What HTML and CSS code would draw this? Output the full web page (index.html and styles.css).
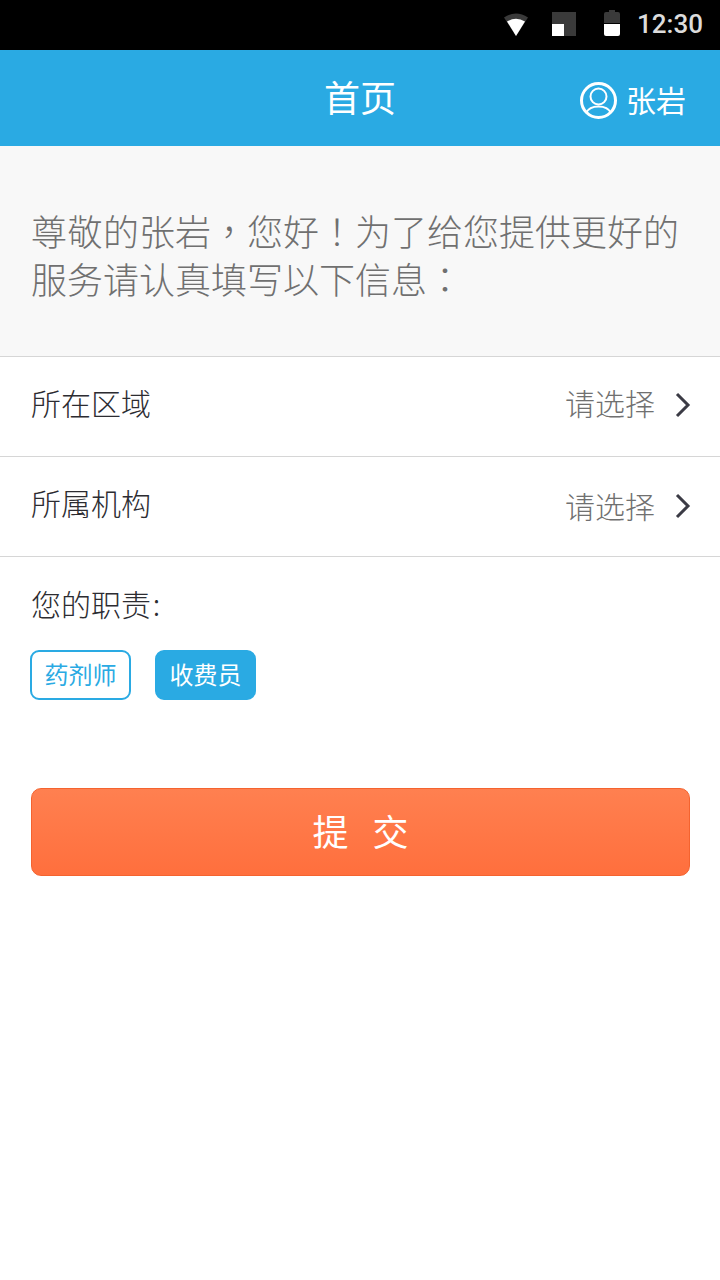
FILE: index.html
```html
<!DOCTYPE html>
<html lang="zh">
<head>
  <meta charset="UTF-8">
  <meta name="viewport" content="width=device-width, initial-scale=1.0">
  <title>首页</title>
  <link rel="stylesheet" href="styles.css">
</head>
<body>
  <div class="status-bar">
    <svg class="icon-wifi" width="24" height="24" viewBox="0 0 24 24">
      <path d="M0 5.5 Q12 -2.5 24 5.5 L12 24 Z" fill="#3a3a3a"/>
      <path d="M3 9.5 Q12 4 21 9.5 L12 24 Z" fill="#fff"/>
    </svg>
    <svg class="icon-sim" width="24" height="24" viewBox="0 0 24 24">
      <rect width="24" height="24" fill="#3a3a3a"/>
      <rect y="12" width="12" height="12" fill="#fff"/>
    </svg>
    <svg class="icon-battery" width="16" height="26" viewBox="0 0 16 26">
      <path d="M5 0h6v2h3a2 2 0 0 1 2 2v9H0V4a2 2 0 0 1 2-2h3z" fill="#3a3a3a"/>
      <path d="M0 14h16v10a2 2 0 0 1-2 2H2a2 2 0 0 1-2-2z" fill="#fff"/>
    </svg>
    <span class="clock">12:30</span>
  </div>

  <header class="top-bar">
    <h1>首页</h1>
    <div class="user">
      <svg width="37" height="37" viewBox="0 0 37 37" fill="none" stroke="#fff">
        <circle cx="18.5" cy="18.5" r="17" stroke-width="3"/>
        <circle cx="18.5" cy="14.5" r="8" stroke-width="2"/>
        <path d="M6 31c2-4 7-6.500 12.500-6.500S29 27 31 31" stroke-width="2"/>
      </svg>
      <span>张岩</span>
    </div>
  </header>

  <section class="notice">
    <p lang="zh-TW">尊敬的张岩，您好！为了给您提供更好的服务请认真填写以下信息：</p>
  </section>

  <div class="row">
    <span class="row-label">所在区域</span>
    <span class="row-value">请选择</span>
    <svg class="chevron" width="16" height="26" viewBox="0 0 16 26"><path d="M2 2l11 11L2 24" fill="none" stroke="#3b3b45" stroke-width="3"/></svg>
  </div>
  <div class="row row-lower">
    <span class="row-label">所属机构</span>
    <span class="row-value">请选择</span>
    <svg class="chevron" width="16" height="26" viewBox="0 0 16 26"><path d="M2 2l11 11L2 24" fill="none" stroke="#3b3b45" stroke-width="3"/></svg>
  </div>

  <section class="duty">
    <div class="duty-title">您的职责 :</div>
    <div class="tags">
      <span class="tag">药剂师</span>
      <span class="tag selected">收费员</span>
    </div>
  </section>

  <button class="submit">提 交</button>
</body>
</html>
```

FILE: styles.css
```css
* { box-sizing: border-box; }
body {
  margin: 0;
  background: #fff;
  font-family: "Noto Sans CJK SC", "Liberation Sans", sans-serif;
  font-weight: 300;
  color: #2c2c31;
}
.status-bar {
  height: 50px;
  background: #000;
  display: flex;
  align-items: center;
  justify-content: flex-end;
  padding-right: 17px;
}
.icon-wifi { margin-right: 24px; margin-top: -2px; }
.icon-sim { margin-right: 28px; margin-top: -2px; }
.icon-battery { margin-right: 17px; margin-top: -4px; }
.clock {
  font-family: Roboto, "Liberation Sans", sans-serif;
  font-size: 26px;
  font-weight: 500;
  color: #dcdcdc;
  margin-top: -2px;
}
.top-bar {
  height: 96px;
  background: #2aaae3;
  color: #fff;
  display: flex;
  align-items: center;
  justify-content: center;
  position: relative;
}
.top-bar h1 { margin: 0 0 4px; font-size: 36px; font-weight: 400; line-height: 92px; }
.user {
  position: absolute;
  right: 34px;
  top: 31px;
  display: flex;
  align-items: center;
  gap: 9px;
  font-size: 30px;
  font-weight: 400;
  line-height: 37px;
}
.user svg { margin-top: -2px; }
.user span { margin-bottom: 3px; }
.notice {
  height: 211px;
  background: #f8f8f8;
  border-bottom: 1px solid #d6d6d6;
  padding: 60px 31px 0;
}
.notice p {
  margin: 0;
  font-family: "Noto Sans CJK TC", sans-serif;
  font-size: 36px;
  line-height: 48px;
  color: #707070;
}
.row {
  height: 100px;
  border-bottom: 1px solid #d6d6d6;
  display: flex;
  align-items: center;
  padding: 0 29px 8px 31px;
}
.row-label { flex: 1; font-size: 30px; margin-bottom: 2px; }
.row-value { font-size: 30px; color: #707070; margin-right: 20px; margin-bottom: 2px; }
.chevron { margin-top: 4px; }
.row-lower .row-value { margin-top: 4px; margin-bottom: 0; }
.row-lower .chevron { margin-top: 6px; }
.duty { padding: 24px 30px 0; }
.duty-title { font-size: 30px; line-height: 44px; margin-left: 1px; word-spacing: -5px; }
.tags { display: flex; gap: 24px; margin-top: 25px; }
.tag {
  width: 101px;
  height: 50px;
  border: 2px solid #2aaae3;
  border-radius: 9px;
  color: #2aaae3;
  font-size: 24px;
  font-weight: 400;
  padding-bottom: 4px;
  display: flex;
  align-items: center;
  justify-content: center;
}
.tag.selected { background: #2aaae3; color: #fff; }
.submit {
  display: block;
  width: 659px;
  height: 88px;
  margin: 88px 0 0 31px;
  padding-bottom: 6px;
  border: 1px solid #f4632f;
  border-radius: 10px;
  background: linear-gradient(#ff8050, #ff6f3d);
  color: #fff;
  font-family: inherit;
  font-weight: 400;
  font-size: 36px;
  word-spacing: 16px;
}
```
